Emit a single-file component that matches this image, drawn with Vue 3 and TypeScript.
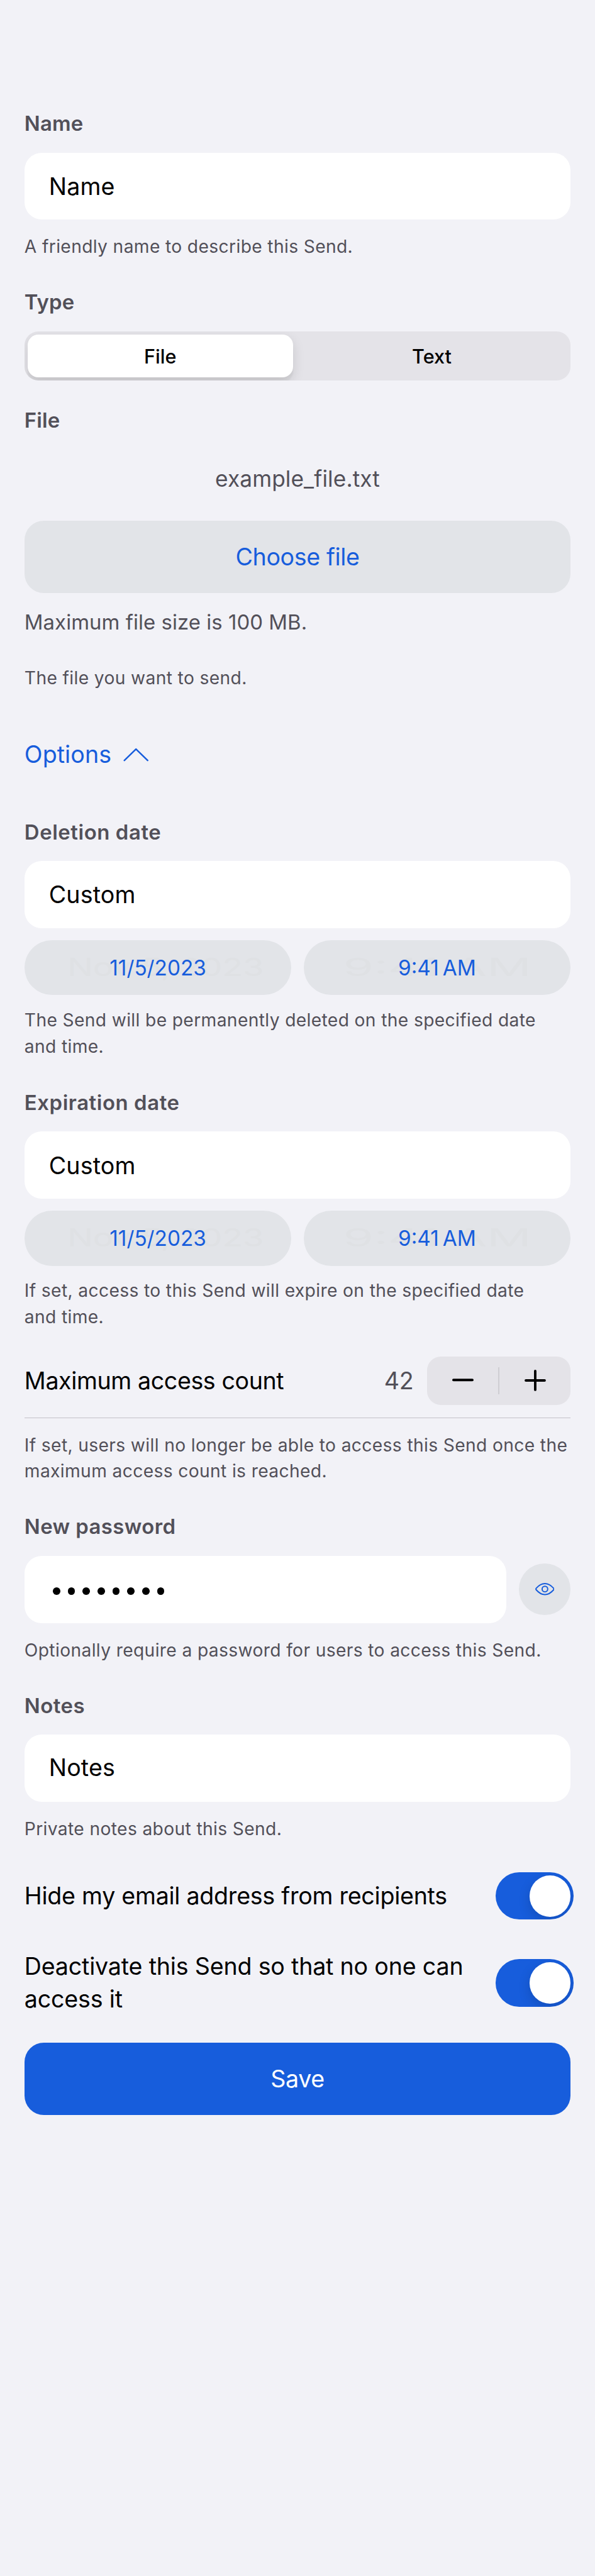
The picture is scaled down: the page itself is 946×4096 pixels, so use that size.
<script setup lang="ts">
import { ref } from 'vue'

interface DateSection {
  id: string
  title: string
  hint: [string, string]
}

const sections: DateSection[] = [
  {
    id: 'deletion',
    title: 'Deletion date',
    hint: ['The Send will be permanently deleted on the specified date', 'and time.'],
  },
  {
    id: 'expiration',
    title: 'Expiration date',
    hint: ['If set, access to this Send will expire on the specified date', 'and time.'],
  },
]

const sendType = ref<'file' | 'text'>('file')
const accessCount = ref(42)
const hideEmail = ref(true)
const deactivated = ref(true)
const passwordLength = 8
</script>

<template>
  <main class="screen">
    <h2 class="label short">Name</h2>
    <div class="field"><span class="value name">Name</span></div>
    <p class="hint">A friendly name to describe this Send.</p>

    <h2 class="label short gap-label">Type</h2>
    <div class="segments">
      <button class="segment" :class="{ selected: sendType === 'file' }" @click="sendType = 'file'">File</button>
      <button class="segment last" :class="{ selected: sendType === 'text' }" @click="sendType = 'text'">Text</button>
    </div>

    <h2 class="label short gap-file">File</h2>
    <p class="filename">example_file.txt</p>
    <button class="button secondary">Choose file</button>
    <p class="limit">Maximum file size is 100 MB.</p>
    <p class="hint hint-file">The file you want to send.</p>

    <button class="options">
      <span>Options</span>
      <svg class="chevron" viewBox="0 0 52 28" fill="none">
        <path d="M2.2 25.8 26 2.6l23.8 23.2" stroke="currentColor" stroke-width="3.2" stroke-linecap="round" stroke-linejoin="round" />
      </svg>
    </button>

    <section v-for="s in sections" :key="s.id" class="date-section" :class="s.id">
      <h2 class="label">{{ s.title }}</h2>
      <div class="field"><span class="value">Custom</span></div>
      <div class="pills">
        <div class="pill">
          <span class="ghost ghost-date" aria-hidden="true">Nov 5, 2023</span>
          <span class="pill-text date">11/5/2023</span>
        </div>
        <div class="pill">
          <span class="ghost ghost-time" aria-hidden="true">9:41 AM</span>
          <span class="pill-text time">9:41&#x202f;AM</span>
        </div>
      </div>
      <p class="hint hint-date">{{ s.hint[0] }}<br />{{ s.hint[1] }}</p>
    </section>

    <div class="count-row">
      <span class="count-title">Maximum access count</span>
      <span class="count">{{ accessCount }}</span>
      <div class="stepper">
        <button class="step" aria-label="Decrease" @click="accessCount--">
          <svg class="step-icon" viewBox="0 0 42 42"><path d="M2.5 20.2h37" stroke="#000" stroke-width="5" stroke-linecap="round" /></svg>
        </button>
        <span class="step-divider"></span>
        <button class="step" aria-label="Increase" @click="accessCount++">
          <svg class="step-icon" viewBox="0 0 42 42"><path d="M2.5 21h37M21 2.5v37" stroke="#000" stroke-width="4.8" stroke-linecap="round" /></svg>
        </button>
      </div>
    </div>
    <p class="hint hint-count">If set, users will no longer be able to access this Send once the<br />maximum access count is reached.</p>

    <h2 class="label password gap-section">New password</h2>
    <div class="password-row">
      <div class="field grow">
        <div class="dots"><i v-for="n in passwordLength" :key="n" class="dot"></i></div>
      </div>
      <button class="reveal" aria-label="Show password">
        <svg class="eye" viewBox="0 0 38 24" fill="none" stroke="currentColor" stroke-width="2.4">
          <path d="M2 10.4C6.7 4.9 12.3 1.2 19 1.2S31.3 4.9 36 10.4Q37.4 12 36 13.6C31.3 19.1 25.7 22.8 19 22.8S6.7 19.1 2 13.6Q.6 12 2 10.4Z" />
          <circle cx="19" cy="12" r="5.5" />
        </svg>
      </button>
    </div>
    <p class="hint">Optionally require a password for users to access this Send.</p>

    <h2 class="label notes gap-section">Notes</h2>
    <div class="field raised"><span class="value">Notes</span></div>
    <p class="hint">Private notes about this Send.</p>

    <div class="toggle-row">
      <span class="toggle-text">Hide my email address from recipients</span>
      <button class="toggle" :class="{ on: hideEmail }" role="switch" aria-label="Hide my email address" @click="hideEmail = !hideEmail"><i class="knob"></i></button>
    </div>
    <div class="toggle-row tall">
      <span class="toggle-text wide">Deactivate this Send so that no one can<br />access it</span>
      <button class="toggle" :class="{ on: deactivated }" role="switch" aria-label="Deactivate this Send" @click="deactivated = !deactivated"><i class="knob"></i></button>
    </div>

    <button class="button primary">Save</button>
  </main>
</template>

<style>
html {
  font-size: calc(100vw / 11.698);
  background: #f2f2f7;
}
body {
  margin: 0;
}
</style>

<style scoped>
.screen {
  box-sizing: border-box;
  min-height: 100vh;
  padding: 2.13rem 0.48rem 0;
  background: #f2f2f7;
  color: #000;
  font-family: Inter, "Liberation Sans", sans-serif;
  font-size: 0.465rem;
  white-space: nowrap;
}
button {
  margin: 0;
  padding: 0;
  border: 0;
  background: none;
  color: inherit;
  font: inherit;
  letter-spacing: inherit;
}
.label {
  margin: 0 0 0.27rem;
  font-size: 0.407rem;
  font-weight: 600;
  line-height: 0.6rem;
  letter-spacing: 0.017em;
  color: #525059;
}
.label.short { letter-spacing: 0.004em; }
.label.password { letter-spacing: 0.012em; }
.label.notes { letter-spacing: 0.014em; }
.label.gap-label { margin-top: 0.53rem; margin-bottom: 0.28rem; }
.label.gap-file { margin-top: 0.48rem; margin-bottom: 0; }
.gap-section { margin-top: 0.54rem; }
.field {
  box-sizing: border-box;
  display: flex;
  align-items: center;
  height: 1.32rem;
  padding: 0.02rem 0.48rem 0;
  border-radius: 0.34rem;
  background: #fff;
}
.field.raised { padding: 0 0.48rem 0.04rem; }
.value { line-height: 0.66rem; letter-spacing: 0.005em; }
.hint {
  margin: 0.285rem 0 -0.005rem;
  font-size: 0.349rem;
  line-height: 0.51rem;
  letter-spacing: 0.0125em;
  color: #525059;
}
.segments {
  box-sizing: border-box;
  display: flex;
  height: 0.96rem;
  padding: 0.06rem;
  border-radius: 0.27rem;
  background: #e4e3e8;
  overflow: hidden;
}
.segment {
  flex: 1;
  border-radius: 0.21rem;
  font-size: 0.378rem;
  font-weight: 500;
}
.segment.last { padding-left: 0.06rem; }
.segment.selected {
  flex: 0 0 5.22rem;
  background: #fff;
  box-shadow: 0 0.09rem 0.24rem rgba(0, 0, 0, 0.12), 0 0.09rem 0.03rem rgba(0, 0, 0, 0.04);
}
.filename {
  margin: 0.57rem 0 0.51rem;
  font-size: 0.436rem;
  line-height: 0.6rem;
  letter-spacing: 0.003em;
  text-align: center;
  color: #525059;
}
.button {
  display: block;
  width: 100%;
  height: 1.42rem;
  border-radius: 0.38rem;
  letter-spacing: -0.01em;
}
.secondary { background: #e2e4e8; color: #175ddc; }
.primary { margin-top: 0.52rem; background: #175ddc; color: #fff; }
.limit {
  margin: 0.27rem 0 0;
  font-size: 0.407rem;
  line-height: 0.6rem;
  letter-spacing: 0.0015em;
  color: #525059;
}
.hint-file { margin: 0.56rem 0 -0.01rem; }
.options {
  display: flex;
  align-items: center;
  gap: 0.23rem;
  height: 0.66rem;
  margin: 0.92rem 0 0.89rem;
  line-height: 0.66rem;
  letter-spacing: 0.002em;
  color: #175ddc;
}
.chevron { width: 0.5rem; height: 0.27rem; }
.date-section + .date-section { margin-top: 0.55rem; }
.pills {
  display: flex;
  gap: 0.24rem;
  margin-top: 0.24rem;
}
.pill {
  position: relative;
  flex: 1;
  height: 1.08rem;
  border-radius: 0.54rem;
  background: #e2e4e8;
  text-align: center;
  line-height: 1.07rem;
  overflow: hidden;
}
.pill-text {
  position: relative;
  font-size: 0.412rem;
  color: #175ddc;
}
.ghost {
  position: absolute;
  inset: 0;
  font-size: 0.49rem;
  color: #dfe1e4;
}
.ghost-date { transform: translateX(0.15rem) scaleX(1.36); }
.ghost-time { transform: scaleX(1.98); }
.hint-date { margin-top: 0.245rem; }
.count-row {
  display: flex;
  align-items: center;
  margin-top: 0.52rem;
  padding-bottom: 0.24rem;
  border-bottom: 1px solid #c2c1c8;
}
.count-title { flex: 1; letter-spacing: -0.0105em; }
.count { margin-right: 0.27rem; color: #525059; letter-spacing: -0.007em; }
.stepper {
  display: flex;
  align-items: center;
  width: 2.82rem;
  height: 0.96rem;
  border-radius: 0.27rem;
  background: #e4e3e8;
}
.step {
  flex: 1;
  display: flex;
  align-items: center;
  justify-content: center;
}
.step-icon { width: 0.42rem; height: 0.42rem; }
.step-divider { width: 0.03rem; height: 0.54rem; background: #cfced3; }
.password-row {
  display: flex;
  align-items: center;
  gap: 0.24rem;
}
.grow { flex: 1; }
.dots {
  display: flex;
  gap: 0.148rem;
  padding: 0.05rem 0 0 0.078rem;
}
.dot {
  width: 0.145rem;
  height: 0.145rem;
  border-radius: 50%;
  background: #000;
}
.reveal {
  display: flex;
  align-items: center;
  justify-content: center;
  width: 1.02rem;
  height: 1.02rem;
  border-radius: 50%;
  background: #e2e4e8;
  color: #175ddc;
}
.eye { width: 0.38rem; height: 0.24rem; }
.toggle-row {
  display: flex;
  align-items: center;
  justify-content: space-between;
  height: 0.93rem;
  margin: 0.595rem -0.06rem 0 0;
}
.toggle-row.tall { height: 1.3rem; }
.toggle-text { line-height: 0.65rem; letter-spacing: -0.007em; }
.toggle-text.wide { letter-spacing: -0.005em; }
.toggle {
  display: flex;
  width: 1.53rem;
  height: 0.93rem;
  padding: 0.06rem;
  box-sizing: border-box;
  border-radius: 0.465rem;
  background: #c7c6cc;
  overflow: hidden;
}
.toggle.on { justify-content: flex-end; background: #175ddc; }
.knob {
  width: 0.81rem;
  height: 0.81rem;
  border-radius: 50%;
  background: #fff;
  box-shadow: 0 0.09rem 0.24rem rgba(0, 0, 0, 0.15);
}
</style>
